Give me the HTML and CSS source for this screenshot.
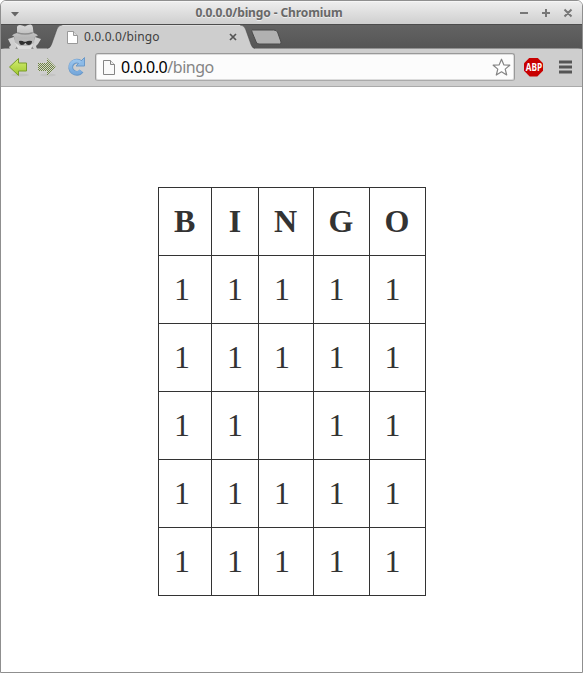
FILE: index.html
```html
<!DOCTYPE html>
<html lang="en">
<head>
<meta charset="utf-8">
<title>0.0.0.0/bingo</title>
<link rel="stylesheet" href="styles.css">
</head>
<body>
<div class="window">
  <header class="titlebar">
    <svg class="win-menu" width="8" height="5"><path d="M0 0h8L4 4.5z" fill="#666"/></svg>
    <span class="title">0.0.0.0/bingo - Chromium</span>
    <svg class="controls" width="54" height="10" fill="none" stroke="#777" stroke-width="2">
      <path d="M1 5h8M23 5h8M27 1v8M45.500 1.500l7 7M52.500 1.500l-7 7"/>
    </svg>
  </header>
  <div class="tabstrip">
    <svg class="tab-shape" width="581" height="25">
      <defs>
        <linearGradient id="face" x2="0" y2="1"><stop offset="0" stop-color="#dadada"/><stop offset="1" stop-color="#b4b4b4"/></linearGradient>
      </defs>
      <path d="M0 25q1-.5 4-.5H46q3 0 4.500-4L56 5q1.500-4 5-4H239q4 0 5.500 4l5.500 15.500q1.500 4 4 4H577q4 0 4 .5z" fill="#cecece"/>
      <path d="M46 24.500q3 0 4.500-4L56 5q1.500-4 5-4M239 1q4 0 5.500 4l5.500 15.500q1.500 4 4 4" fill="none" stroke="#454545" stroke-opacity=".5"/>
      <path d="M62 1.500H239" stroke="#dedede"/>
      <path d="M251.500 6h21q3 0 4 2l3.500 10q.5 2-1.500 2H258q-2 0-2.800-2l-4.200-10q-.6-2 .5-2z" fill="#b1b1b1" stroke="#4b4b4b"/>
      <path d="M7 15l6-2 3 10-2 2H9l-1-2 2-2zM40 15l-6-2-3 10 2 2h3l-1-3 2-2z" fill="#cfcfcf"/>
      <path d="M13 12h21l-1 8-4 5H18l-4-5z" fill="#b8b8b8"/>
      <path d="M13 18l6 4 9 0 5-3-3 6H17z" fill="#dcdcdc"/>
      <path d="M11 11.500q1.500-2 5-2.500L16 3.500Q16 1 19 1q2 0 5 1.500Q27 .500 29.500.500q2 0 2.300 2.500L32.500 9q3 .8 4.500 2.500-5 3-13 3t-13-3z" fill="url(#face)"/>
      <path d="M16.200 8q7.500 2.500 15.500 0v1.500q-7.500 2.700-15.500 0z" fill="#8e8e8e"/>
      <path d="M18 17q3-.7 5 .8h2q2-1.500 6-.8 0 4-3.500 4-2.300 0-2.700-2h-.8q-.5 2-3 2-2.800 0-3-4z" fill="#303030"/>
    </svg>
    <div class="tab">
      <svg width="11" height="13"><path d="M.5.500h6l4 4v8H.5z" fill="#fff" stroke="#999"/><path d="M6.500.500v4h4" fill="#ddd" stroke="#999"/></svg>
      <span class="tab-title">0.0.0.0/bingo</span>
      <svg class="tab-close" width="8" height="8"><path d="M1 1l6 6M7 1L1 7" stroke="#555" stroke-width="1.700"/></svg>
    </div>
  </div>
  <nav class="toolbar">
    <svg class="nav-icons" width="80" height="24">
      <defs>
        <linearGradient id="green" x2="0" y2="1"><stop offset="0" stop-color="#d5ee74"/><stop offset="1" stop-color="#9ec72b"/></linearGradient>
        <pattern id="dots" width="2" height="2" patternUnits="userSpaceOnUse"><path d="M0 0h1v1H0zM1 1h1v1H1z" fill="#6d7f48"/><path d="M1 0h1v1H1zM0 1h1v1H0z" fill="#d6dac8"/></pattern>
        <linearGradient id="blue" x2="0" y2="1"><stop offset="0" stop-color="#9ac4ec"/><stop offset="1" stop-color="#77a9dc"/></linearGradient>
      </defs>
      <ellipse cx="12" cy="20" rx="9" ry="1.500" fill="#c2c2c2"/>
      <ellipse cx="40" cy="20" rx="8" ry="1.500" fill="#c3c3c3"/>
      <path d="M1.500 12L10.500 3.500v4.500h8v8h-8v4.500z" fill="url(#green)" stroke="#7a9c2a" stroke-linejoin="round"/>
      <path d="M48 12L39 3v5h-9v8h9v5z" fill="url(#dots)"/>
      <path d="M72 7.200A6 6 0 1 0 73.500 16" fill="none" stroke="#6a99c9" stroke-width="5"/>
      <path d="M76.500 2.500v8.500h-8.500z" fill="#8cbae6" stroke="#6a99c9"/>
      <path d="M72.500 7.500A6 6 0 1 0 73 15.800" fill="none" stroke="url(#blue)" stroke-width="3.400"/>
    </svg>
    <div class="omnibox">
      <svg width="12" height="15"><path d="M.5.500h7l4 4v10H.5z" fill="#fafafa" stroke="#858585"/><path d="M7.500.500v4h4" fill="#eee" stroke="#858585"/></svg>
      <span class="url">0.0.0.0<span class="path">/bingo</span></span>
      <svg class="star" width="19" height="18"><path d="M9.500 1.200l2.300 5.600 6 .4-4.600 3.900 1.500 5.900-5.200-3.200L4.300 17l1.500-5.900L1.200 7.200l6-.4z" fill="#fff" stroke="#858585" stroke-width="1.200" stroke-linejoin="round"/></svg>
    </div>
    <div class="abp"><span>ABP</span></div>
    <svg class="menu" width="13" height="14"><path d="M0 2h13M0 7h13M0 12h13" stroke="#555" stroke-width="3"/></svg>
  </nav>
  <main class="page">
    <table class="bingo">
      <colgroup><col class="b"><col class="i"><col class="n"><col class="g"><col class="o"></colgroup>
      <tr><th>B</th><th class="center">I</th><th>N</th><th>G</th><th>O</th></tr>
      <tr><td>1</td><td>1</td><td>1</td><td>1</td><td>1</td></tr>
      <tr><td>1</td><td>1</td><td>1</td><td>1</td><td>1</td></tr>
      <tr><td>1</td><td>1</td><td></td><td>1</td><td>1</td></tr>
      <tr><td>1</td><td>1</td><td>1</td><td>1</td><td>1</td></tr>
      <tr><td>1</td><td>1</td><td>1</td><td>1</td><td>1</td></tr>
    </table>
  </main>
</div>
</body>
</html>
```
FILE: styles.css
```css
* { box-sizing: border-box; }
html, body { margin: 0; height: 100%; overflow: hidden; background: #fff; }
svg { display: block; flex: none; }
.window {
  height: 673px;
  border: 1px solid #8f8f8f;
  border-radius: 6px 6px 0 0;
  overflow: hidden;
  font-family: "Noto Sans", "Open Sans", sans-serif;
}
.titlebar {
  height: 23px;
  display: flex;
  align-items: center;
  padding: 0 9px 0 10px;
  background: linear-gradient(#ededed, #cfcfcf);
  border-top: 1px solid #f6f6f6;
}
.win-menu { margin-top: 2px; }
.title {
  flex: 1;
  text-align: center;
  font-size: 12px;
  line-height: 24px;
  font-weight: 700;
  letter-spacing: -0.1px;
  color: #686868;
  text-shadow: 0 1px #eee;
  white-space: nowrap;
}
.tabstrip { position: relative; height: 25px; background: linear-gradient(#636363, #555); border-top: 1px solid #4c4c4c; }
.tab-shape { position: absolute; left: 0; top: -1px; }
.tab {
  position: relative;
  display: flex;
  align-items: center;
  width: 236px;
  height: 24px;
  padding-left: 66px;
}
.tab-title { margin-left: 6px; font-size: 12px; line-height: 22px; margin-top: -1px; letter-spacing: 0.12px; color: #404040; }
.tab-close { margin-left: auto; }
.toolbar {
  height: 38px;
  display: flex;
  align-items: center;
  padding: 0 10px 1px 7px;
  background: #cecece;
  border-bottom: 1px solid #aaa;
}
.omnibox {
  width: 420px;
  height: 28px;
  margin-left: 7px;
  padding: 0 3px 0 7px;
  display: flex;
  align-items: center;
  border: 1px solid #999;
  border-bottom-color: #aaa;
  border-radius: 3px;
  background: #fcfcfc;
  box-shadow: inset 0 0 0 1px #dcdcdc;
}
.url { margin-left: 6px; font-size: 16px; line-height: 24px; color: #000; letter-spacing: -0.46px; }
.path { color: #858585; }
.star { margin-left: auto; }
.abp {
  width: 19px;
  height: 19px;
  margin-left: 9px;
  display: flex;
  align-items: center;
  justify-content: center;
  background: #c80000;
  clip-path: polygon(30% 0, 70% 0, 100% 30%, 100% 70%, 70% 100%, 30% 100%, 0 70%, 0 30%);
  color: #fff;
  font: 700 10px/19px "Open Sans", sans-serif;
}
.abp span { transform: scaleX(0.82); }
.menu { margin-left: auto; }
.page { padding: 100px 0 0 157px; background: #fff; }
.bingo {
  table-layout: fixed;
  width: 268px;
  border-collapse: collapse;
  font: 32px/37px "Liberation Serif", serif;
  color: #333;
}
.bingo th, .bingo td { height: 68px; padding: 15px; border: 1px solid #333; text-align: left; }
.bingo th.center { padding: 15px 0; text-align: center; }
.bingo th:nth-child(n+4), .bingo td:nth-child(n+4) { padding-left: 14.500px; }
.b { width: 53px; }
.i { width: 47px; }
.n { width: 55px; }
.g, .o { width: 56px; }
```
